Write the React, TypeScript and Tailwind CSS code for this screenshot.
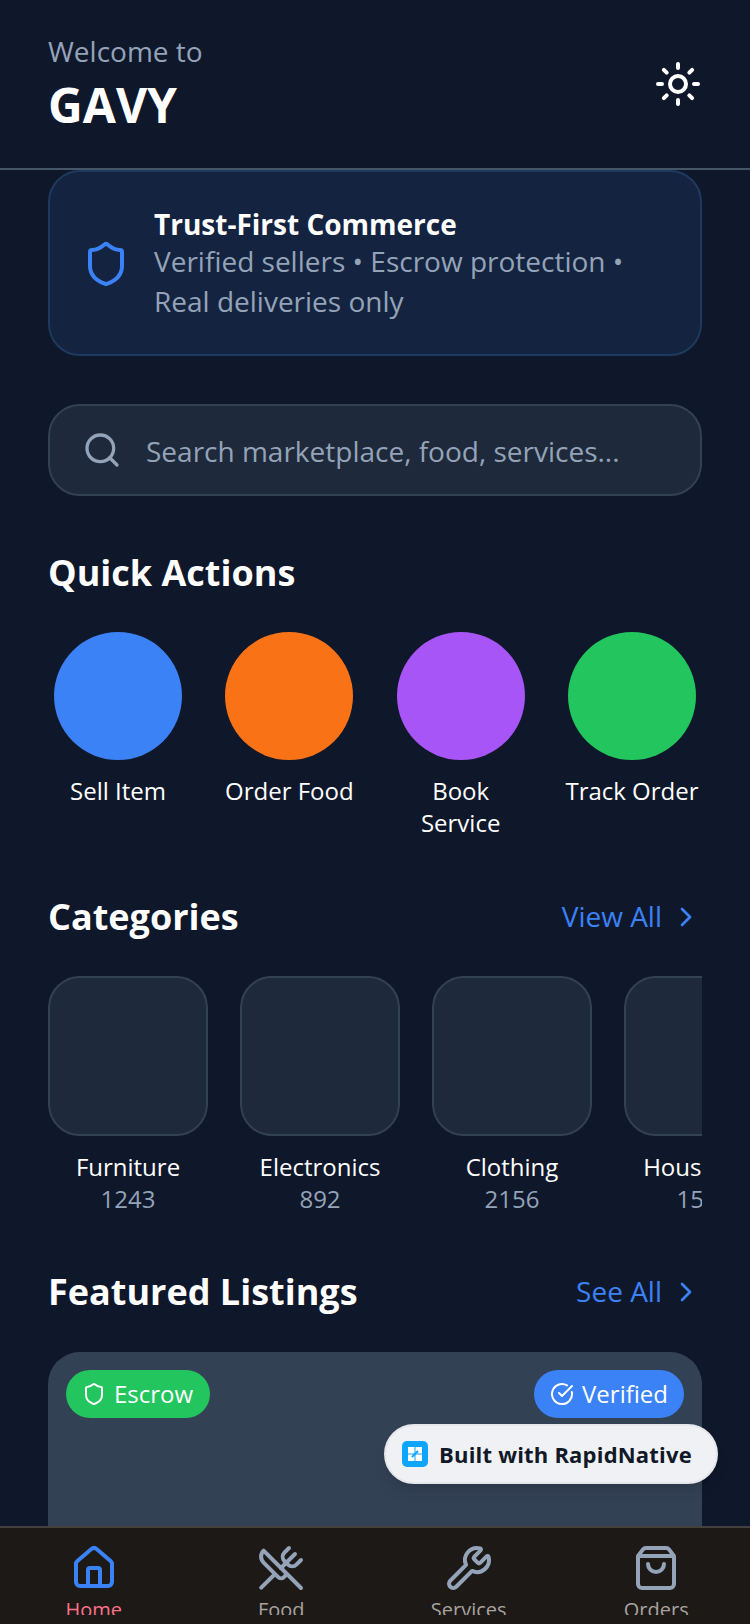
import React from "react";
import { ChevronRight, Search, Shield, Sun, CircleCheckBig, House, UtensilsCrossed, Wrench, ShoppingBag } from "lucide-react";

const quickActions = [
  { label: "Sell Item", color: "bg-[#3b82f6]" },
  { label: "Order Food", color: "bg-[#f97316]" },
  { label: "Book Service", color: "bg-[#a855f7]" },
  { label: "Track Order", color: "bg-[#22c55e]" },
];

const categories = [
  { name: "Furniture", count: "1243" },
  { name: "Electronics", count: "892" },
  { name: "Clothing", count: "2156" },
  { name: "Household", count: "1534" },
];

const tabs = [
  { label: "Home", Icon: House, active: true },
  { label: "Food", Icon: UtensilsCrossed, active: false },
  { label: "Services", Icon: Wrench, active: false },
  { label: "Orders", Icon: ShoppingBag, active: false },
];

function SectionLink({ label }: { label: string }) {
  return (
    <div className="flex items-center gap-2 text-[#3b82f6]">
      <span className="pb-[2px] text-[28px] leading-[40px]">{label}</span>
      <ChevronRight className="w-8 h-8" strokeWidth={2} />
    </div>
  );
}

export default function App() {
  return (
    <div className="relative flex flex-col h-[1624px] w-[750px] overflow-hidden bg-[#0f172a] font-['Open_Sans',sans-serif]">
      {/* Header */}
      <header className="flex h-[170px] shrink-0 items-center justify-between border-b-2 border-[#475569] px-12 py-2">
        <div className="flex flex-col">
          <span className="text-[28px] leading-[40px] text-[#94a3b8]">Welcome to</span>
          <span className="mt-[2px] text-[48px] leading-[64px] font-bold text-white">GAVY</span>
        </div>
        <Sun className="w-12 h-12 text-white" strokeWidth={2} />
      </header>

      {/* Scroll content */}
      <main className="flex-1 overflow-hidden px-12">
        {/* Trust banner */}
        <div className="flex h-[186px] items-center gap-6 rounded-[32px] border-2 border-[#1e3a5f] bg-[#14233f] px-8">
          <Shield className="mt-[2px] w-12 h-12 shrink-0 text-[#3b82f6]" strokeWidth={2} />
          <div className="flex flex-col pt-[2px]">
            <span className="text-[28px] leading-[34px] font-bold text-white">Trust-First Commerce</span>
            <span className="text-[28px] leading-[40px] text-[#94a3b8]">
              Verified sellers • Escrow protection • Real deliveries only
            </span>
          </div>
        </div>

        {/* Search */}
        <div className="mt-12 flex h-[92px] items-center gap-6 rounded-[32px] border-2 border-[#334155] bg-[#1e293b] px-8">
          <Search className="w-10 h-10 shrink-0 text-[#94a3b8]" strokeWidth={2} />
          <span className="pt-[2px] text-[28px] text-[#94a3b8]">Search marketplace, food, services...</span>
        </div>

        {/* Quick Actions */}
        <h2 className="mt-[53px] text-[36px] leading-[48px] font-bold text-white">Quick Actions</h2>
        <div className="mt-[35px] flex justify-between">
          {quickActions.map((a) => (
            <div key={a.label} className="flex w-[140px] flex-col items-center">
              <div className={`h-32 w-32 rounded-full ${a.color}`} />
              <span className="mt-[15px] text-center text-[24px] leading-[32px] text-white">{a.label}</span>
            </div>
          ))}
        </div>

        {/* Categories */}
        <div className="mt-[54px] flex items-center justify-between">
          <h2 className="text-[36px] leading-[48px] font-bold text-white">Categories</h2>
          <SectionLink label="View All" />
        </div>
        <div className="mt-[35px] flex gap-8 overflow-hidden">
          {categories.map((c) => (
            <div key={c.name} className="flex w-40 shrink-0 flex-col items-center">
              <div className="h-40 w-40 rounded-[32px] border-2 border-[#334155] bg-[#1e293b]" />
              <span className="mt-[15px] text-[24px] leading-[32px] text-white">{c.name}</span>
              <span className="text-[24px] leading-[32px] text-[#94a3b8]">{c.count}</span>
            </div>
          ))}
        </div>

        {/* Featured */}
        <div className="mt-[53px] flex items-center justify-between">
          <h2 className="text-[36px] leading-[48px] font-bold text-white">Featured Listings</h2>
          <SectionLink label="See All" />
        </div>
        <div className="relative mt-9 h-[400px] rounded-[32px] bg-[#334155]">
          <div className="absolute left-[18px] top-[18px] flex h-12 items-center gap-2 rounded-full bg-[#22c55e] pl-4 pr-[17px]">
            <Shield className="w-6 h-6 text-white" strokeWidth={2} />
            <span className="text-[24px] text-white">Escrow</span>
          </div>
          <div className="absolute right-[18px] top-[18px] flex h-12 items-center gap-2 rounded-full bg-[#3b82f6] px-4">
            <CircleCheckBig className="w-6 h-6 text-white" strokeWidth={2} />
            <span className="text-[24px] text-white">Verified</span>
          </div>
        </div>
      </main>

      {/* Tab bar */}
      <nav className="grid h-[98px] shrink-0 grid-cols-4 border-t-2 border-[#44403c] bg-[#1c1917] pt-4">
        {tabs.map(({ label, Icon, active }) => (
          <div key={label} className="flex h-[71px] flex-col items-center overflow-hidden">
            <Icon className={`w-12 h-12 shrink-0 ${active ? "text-[#3b82f6]" : "text-[#94a3b8]"}`} strokeWidth={2} />
            <span className={`mt-1 text-[20px] leading-[28px] ${active ? "text-[#fb7185]" : "text-[#a8a29e]"}`}>{label}</span>
          </div>
        ))}
      </nav>

      {/* Built with badge */}
      <div className="absolute left-[384px] top-[1424px] flex h-[60px] w-[334px] items-center gap-[11px] rounded-full border-2 border-[#e5e7eb] bg-[#f0f1f4] pl-4 shadow-lg">
        <svg width="26" height="26" viewBox="0 0 26 26" className="shrink-0">
          <rect width="26" height="26" rx="5" fill="#0ea5ff" />
          <path d="M6 6h6.5v6.5H6zM13.5 6H20v6.5h-6.5zM6 13.5h6.5V20H6zM13.5 13.5H20V20h-6.5z" fill="#fff" />
          <path d="M10 16l6-6" stroke="#0ea5ff" strokeWidth="2" />
        </svg>
        <span className="text-[22px] font-bold tracking-[0.2px] text-[#111827] whitespace-nowrap">Built with RapidNative</span>
      </div>
    </div>
  );
}
